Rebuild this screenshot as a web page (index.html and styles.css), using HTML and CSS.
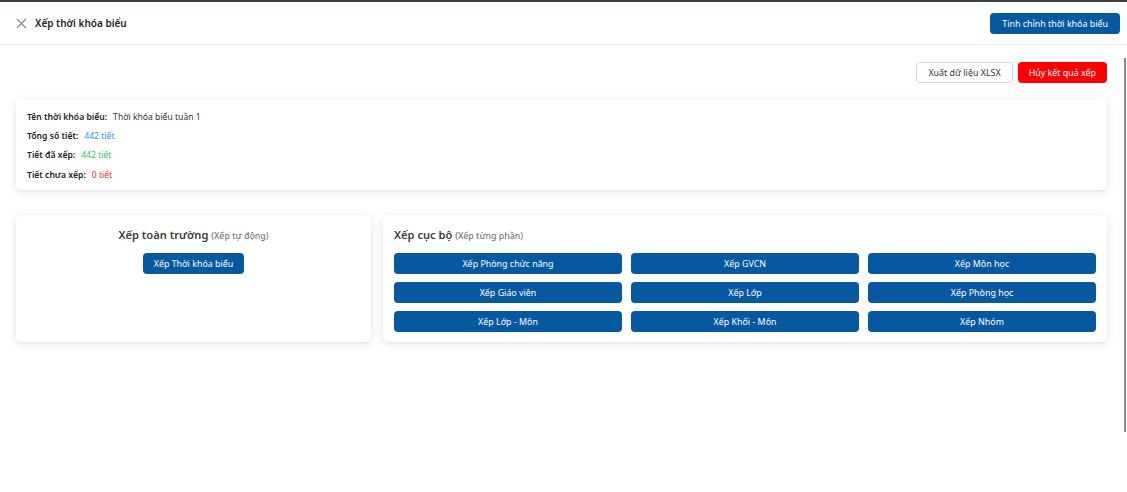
FILE: index.html
```html
<!DOCTYPE html>
<html lang="vi">
<head>
<meta charset="utf-8">
<title>Xếp thời khóa biểu</title>
<link rel="stylesheet" href="styles.css">
</head>
<body>
<div class="page">
  <header class="topbar">
    <div class="title-wrap">
      <svg class="close-icon" width="11" height="11" viewBox="0 0 11 11"><path d="M1 1L10 10M10 1L1 10" stroke="#8a8a8a" stroke-width="1.2" fill="none"/></svg>
      <span class="title">Xếp thời khóa biểu</span>
    </div>
    <button class="btn btn-primary btn-top">Tinh chỉnh thời khóa biểu</button>
  </header>
  <main class="content">
    <div class="actions">
      <button class="btn btn-outline">Xuất dữ liệu XLSX</button>
      <button class="btn btn-danger">Hủy kết quả xếp</button>
    </div>
    <section class="card info">
      <div class="row"><span class="label">Tên thời khóa biểu:</span><span class="val">Thời khóa biểu tuần 1</span></div>
      <div class="row"><span class="label">Tổng số tiết:</span><span class="val blue">442 tiết</span></div>
      <div class="row"><span class="label">Tiết đã xếp:</span><span class="val green">442 tiết</span></div>
      <div class="row"><span class="label">Tiết chưa xếp:</span><span class="val red">0 tiết</span></div>
    </section>
    <div class="panels">
      <section class="card panel panel-left">
        <h3 class="panel-title">Xếp toàn trường <span class="sub">(Xếp tự động)</span></h3>
        <button class="btn btn-primary btn-auto">Xếp Thời khóa biểu</button>
      </section>
      <section class="card panel panel-right">
        <h3 class="panel-title">Xếp cục bộ <span class="sub">(Xếp từng phần)</span></h3>
        <div class="grid">
          <button class="btn btn-primary">Xếp Phòng chức năng</button>
          <button class="btn btn-primary">Xếp GVCN</button>
          <button class="btn btn-primary">Xếp Môn học</button>
          <button class="btn btn-primary">Xếp Giáo viên</button>
          <button class="btn btn-primary">Xếp Lớp</button>
          <button class="btn btn-primary">Xếp Phòng học</button>
          <button class="btn btn-primary">Xếp Lớp - Môn</button>
          <button class="btn btn-primary">Xếp Khối - Môn</button>
          <button class="btn btn-primary">Xếp Nhóm</button>
        </div>
      </section>
    </div>
  </main>
  <div class="scrollbar"><span class="thumb"></span></div>
</div>
</body>
</html>
```
FILE: styles.css
```css
* { box-sizing: border-box; }
html, body { margin: 0; padding: 0; background: #fff; }
body {
  font-family: "Noto Sans", "Open Sans", sans-serif;
  color: #1f1f1f;
  height: 492px;
  overflow: hidden;
}
.page {
  position: relative;
  height: 492px;
  border-top: 2px solid #3b4343;
}
.topbar {
  height: 43px;
  border-bottom: 1px solid #ececec;
  display: flex;
  align-items: center;
  justify-content: space-between;
  padding: 0 7px 0 16px;
}
.title-wrap { display: flex; align-items: center; gap: 8px; }
.close-icon { display: block; }
.title { font-size: 10px; font-weight: 600; color: #222; }
.btn {
  font-family: inherit;
  border: none;
  border-radius: 4px;
  cursor: pointer;
  font-size: 8.9px;
  height: 21px;
  padding: 0 11px;
  line-height: 21px;
  white-space: nowrap;
}
.btn-primary { background: #0659a0; color: #fff; }
.btn-top { height: 21px; padding: 0 12px; font-size: 8.9px; margin-top: 1px; }
.btn-outline { background: #fff; color: #333; border: 1px solid #d6d6d6; line-height: 19px; }
.btn-danger { background: #ff0000; color: #fff; }
.content { padding: 17px 20px 0 16px; }
.actions { display: flex; justify-content: flex-end; gap: 5px; }
.card {
  background: #fff;
  border-radius: 5px;
  box-shadow: 0 2px 8px rgba(0, 0, 0, 0.13);
}
.info {
  margin-top: 16px;
  padding: 8px 11px 6px;
  font-size: 8.6px;
}
.row { height: 19.3px; display: flex; align-items: center; gap: 6px; }
.label { font-weight: 600; color: #222; }
.val { color: #333; }
.blue { color: #1e90ff; }
.green { color: #1fc35a; }
.red { color: #ff1a1a; }
.panels {
  margin-top: 25px;
  display: grid;
  grid-template-columns: 355px 1fr;
  gap: 12px;
}
.panel { height: 127px; padding: 11px 11px; }
.panel-title {
  margin: 0;
  font-size: 11.1px;
  font-weight: 600;
  color: #3b3b3b;
  height: 17px;
  line-height: 17px;
}
.sub { font-size: 8.8px; font-weight: 500; color: #777; }
.panel-left { display: flex; flex-direction: column; align-items: center; }
.btn-auto { margin-top: 10px; padding: 0 11px; }
.grid {
  margin-top: 10px;
  display: grid;
  grid-template-columns: repeat(3, 1fr);
  gap: 8px 9px;
}
.grid .btn { width: 100%; }
.scrollbar {
  position: absolute;
  right: 0;
  top: 50px;
  width: 4px;
  bottom: 0;
}
.thumb {
  position: absolute;
  left: 1px;
  top: 6px;
  width: 2px;
  height: 374px;
  background: #8c8c8c;
}
```
